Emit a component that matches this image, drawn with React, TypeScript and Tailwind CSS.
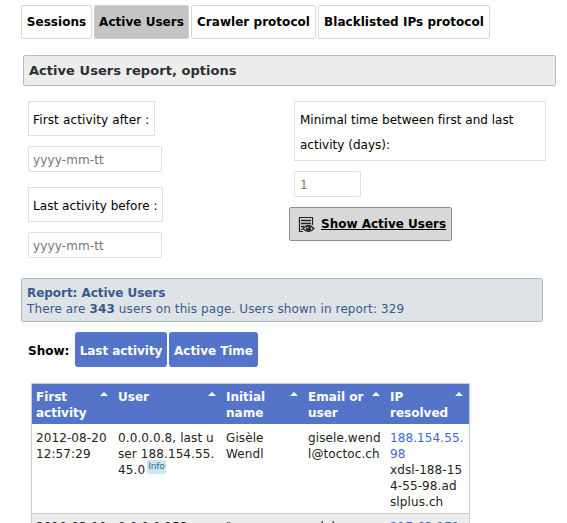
import React from "react";

const tabs = [
  { label: "Sessions", cls: "w-[71px] bg-white border-[#d8d8d8]" },
  { label: "Active Users", cls: "w-[95px] bg-[#c4c4c4] border-[#cfcfcf]" },
  { label: "Crawler protocol", cls: "w-[125px] bg-white border-[#d8d8d8]" },
  { label: "Blacklisted IPs protocol", cls: "w-[172px] bg-white border-[#d8d8d8]" },
];

const columns = ["First activity", "User", "Initial name", "Email or user", "IP resolved"];

function Tag({ children, cls = "" }: { children: React.ReactNode; cls?: string }) {
  return <div className={`border border-[#dfdfdf] px-1 pt-[6px] leading-[25px] ${cls}`}>{children}</div>;
}

function Field({ placeholder, cls }: { placeholder: string; cls: string }) {
  return (
    <input
      placeholder={placeholder}
      className={`block h-[26px] rounded-[2px] border border-[#dfdfdf] bg-white px-1 pt-px tracking-[0.12px] outline-none placeholder:text-[#777] ${cls}`}
    />
  );
}

function ReportIcon() {
  return (
    <svg width="17" height="17" viewBox="0 0 17 17" fill="none" stroke="#222" className="shrink-0">
      <path d="M1.500 16V1.500H14.500V9" strokeWidth="1.200" />
      <path d="M3 4.500H13M3 7.500H13M3 10.500H6" strokeWidth="1.600" />
      <path d="M3 13.500H4.500M1 15.500H5" />
      <path d="M5 12.500Q10.500 6.500 16 12.500Q10.500 18.500 5 12.500Z" fill="#e4e4e4" strokeWidth="1.300" />
      <circle cx="10.500" cy="12.500" r="2.500" fill="#1c1c1c" stroke="none" />
      <circle cx="10" cy="11.700" r=".7" fill="#fff" stroke="none" />
    </svg>
  );
}

export default function App() {
  return (
    <div className="h-[523px] w-[567px] overflow-hidden bg-white pt-[5px] font-['DejaVu_Sans',sans-serif] text-[12px] text-black">
      <nav className="ml-[21px] flex gap-[2px] font-bold">
        {tabs.map((t) => (
          <div key={t.label} className={`flex h-[34px] items-center justify-center whitespace-nowrap rounded-[2px] border tracking-[0.03px] ${t.cls}`}>
            {t.label}
          </div>
        ))}
      </nav>
      <h1 className="ml-[23px] mt-4 flex h-[31px] w-[533px] items-center rounded-[2px] border border-[#bcbcbc] bg-[#ededed] px-[5px] text-[13px] font-bold tracking-[0.04px] text-[#2b2f33]">
        Active Users report, options
      </h1>
      <div className="ml-[28px] mt-[15px] flex h-[177px]">
        <div className="w-[266px]">
          <Tag cls="h-[35px] w-[127px] tracking-[0.14px]">First activity after :</Tag>
          <Field placeholder="yyyy-mm-tt" cls="mt-[10px] w-[134px]" />
          <Tag cls="mt-[15px] h-[35px] w-[135px] tracking-[0.06px]">Last activity before :</Tag>
          <Field placeholder="yyyy-mm-tt" cls="mt-[10px] w-[134px]" />
        </div>
        <div>
          <Tag cls="h-[60px] w-[252px] pl-[5px] tracking-[0.02px]">Minimal time between first and last activity (days):</Tag>
          <Field placeholder="1" cls="mt-[10px] w-[67px] pl-[5px]" />
          <button className="-ml-[5px] mt-[10px] flex h-[34px] w-[163px] items-center gap-[6px] rounded-[2px] border border-[#8f8f8f] bg-[#d8d8d8] pl-2 font-bold">
            <ReportIcon />
            <span className="whitespace-nowrap underline">Show Active Users</span>
          </button>
        </div>
      </div>
      <div className="ml-[21px] h-[44px] w-[522px] rounded-[2px] border border-[#a9b9bd] bg-[#dee3e7] px-[5px] pt-[6px] leading-4 text-[#3b5a8c]">
        <div className="font-bold tracking-[-0.05px]">Report: Active Users</div>
        <div className="tracking-[0.11px]">There are <b>343</b> users on this page. Users shown in report: 329</div>
      </div>
      <div className="ml-[28px] mt-[10px] flex h-[35px] items-center gap-[2px] font-bold">
        <span className="w-[45px] pt-[2px]">Show:</span>
        <button className="h-full w-[92px] whitespace-nowrap rounded-[3px] bg-[#5374c8] pt-[2px] tracking-[-0.05px] text-white">Last activity</button>
        <button className="h-full w-[89px] whitespace-nowrap rounded-[3px] bg-[#5374c8] pt-[2px] tracking-[-0.05px] text-white">Active Time</button>
      </div>
      <table className="ml-[31px] mt-4 w-[439px] table-fixed border-separate border-spacing-0 border border-[#ccc] leading-4 tracking-[0.1px] text-[#222]">
        <colgroup>
          <col className="w-[82px]" />
          <col className="w-[108px]" />
          <col className="w-[82px]" />
          <col className="w-[82px]" />
          <col />
        </colgroup>
        <thead>
          <tr className="h-[40px] bg-[#5374c8] text-left align-top tracking-normal text-white">
            {columns.map((c) => (
              <th key={c} className="px-0 pb-0 pl-1 pr-[6px] pt-[5px]">
                <div className="flex items-start justify-between">
                  <span>{c}</span>
                  <span className="mt-[3px] border-x-[4px] border-b-[4px] border-x-transparent border-b-white" />
                </div>
              </th>
            ))}
          </tr>
        </thead>
        <tbody className="break-all align-top">
          <tr className="h-[89px]">
            <td className="pl-1 pt-[6px]">2012-08-20<br />12:57:29</td>
            <td className="pl-1 pt-[6px]">
              0.0.0.0.8, last u<br />ser 188.154.55.<br />45.0
              <span className="relative -top-[2px] ml-[2px] inline-block h-[14px] rounded-[2px] bg-[#cfe6f1] px-px align-top text-[9px] leading-[13px] tracking-[-0.1px] text-[#286a91]">Info</span>
            </td>
            <td className="pl-1 pt-[6px]">Gisèle<br />Wendl</td>
            <td className="pl-1 pt-[6px]">gisele.wend<br />l@toctoc.ch</td>
            <td className="pl-1 pt-[6px]"><span className="text-[#4169c0]">188.154.55.<br />98</span><br />xdsl-188-15<br />4-55-98.ad<br />slplus.ch</td>
          </tr>
          <tr className="bg-[#ededed]">
            <td className="border-t border-[#ccc] pl-1 pt-[5px]">2010-03-10</td>
            <td className="border-t border-[#ccc] pl-1 pt-[5px]">0.0.0.0.153</td>
            <td className="border-t border-[#ccc] pl-1 pt-[5px]">"</td>
            <td className="border-t border-[#ccc] pl-1 pt-[5px]">erleb</td>
            <td className="border-t border-[#ccc] pl-1 pt-[5px] text-[#4169c0]">217.63.171.</td>
          </tr>
        </tbody>
      </table>
    </div>
  );
}
